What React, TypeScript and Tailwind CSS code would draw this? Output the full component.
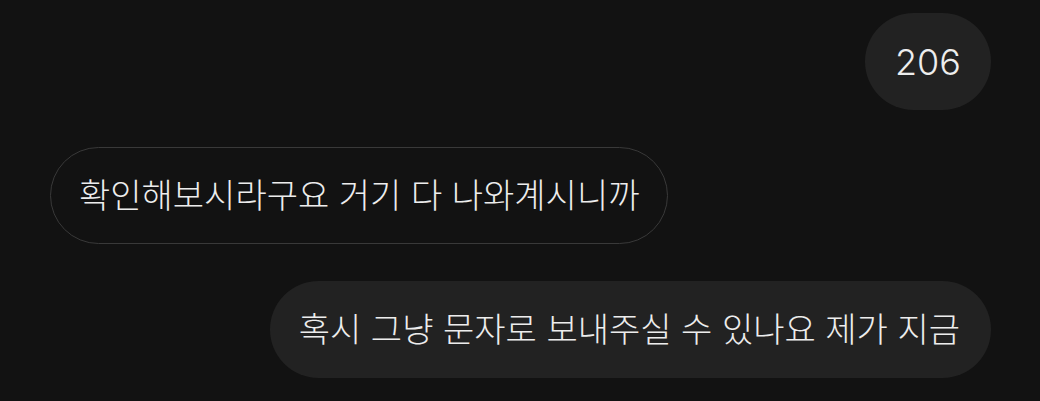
import React from 'react';

type Message = { id: number; text: string; mine: boolean; size: string };

const messages: Message[] = [
  { id: 1, text: '206', mine: true, size: 'text-[36px] px-[30px]' },
  { id: 2, text: '확인해보시라구요 거기 다 나와계시니까', mine: false, size: 'text-[34px] px-[28px]' },
  { id: 3, text: '혹시 그냥 문자로 보내주실 수 있나요 제가 지금', mine: true, size: 'text-[34px] pl-[29px] pr-[31px]' },
];

export default function App() {
  return (
    <div
      className="w-[1040px] h-[401px] overflow-hidden bg-[#121212] px-[49px] pt-[13px] flex flex-col gap-[37px]"
      style={{ fontFamily: 'Inter, "Noto Sans CJK KR", sans-serif' }}
    >
      {messages.map(m => (
        <div key={m.id} className={`flex ${m.mine ? 'justify-end' : 'justify-start'}`}>
          <div
            className={`h-[97px] flex items-center rounded-full font-light leading-none text-[#ededed] whitespace-nowrap ${m.size} ${
              m.mine
                ? 'bg-[#222222]'
                : 'bg-[#121212] border-[1.5px] border-[#393939] ml-px'
            }`}
          >
            {m.text}
          </div>
        </div>
      ))}
    </div>
  );
}
